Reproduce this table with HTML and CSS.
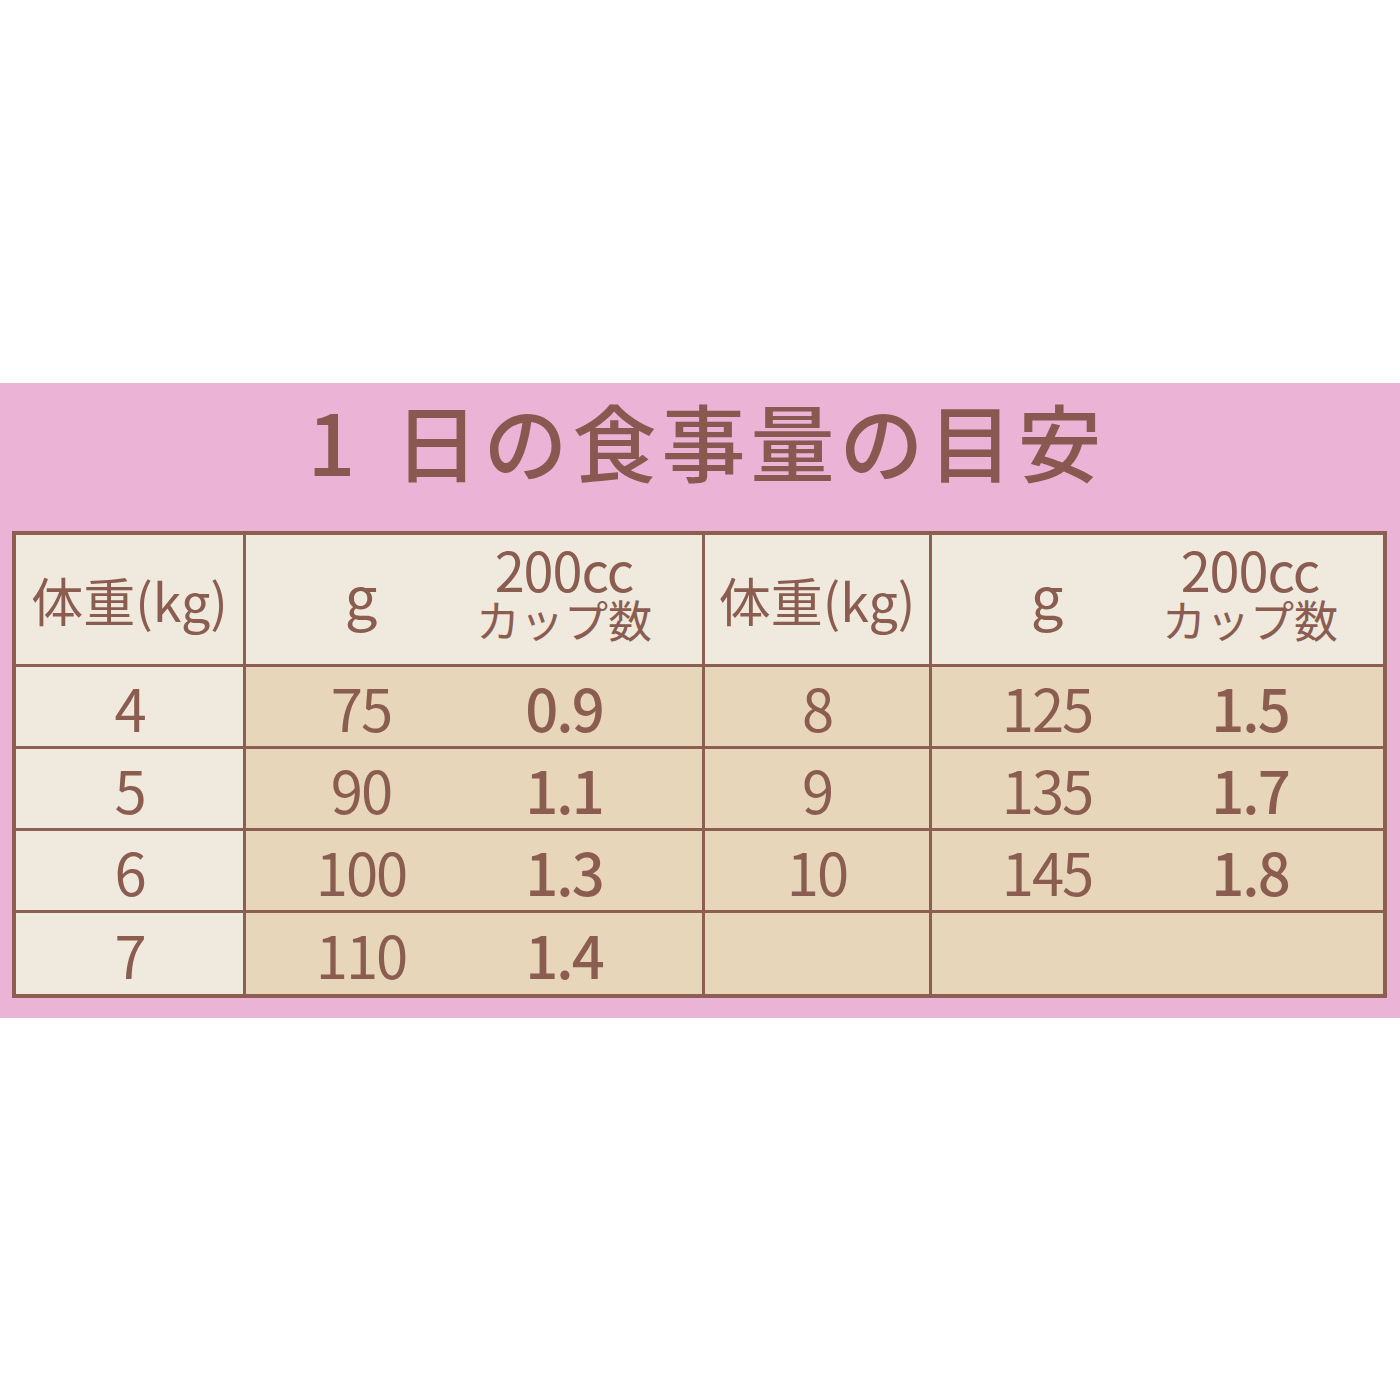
FILE: index.html
```html
<!DOCTYPE html>
<html lang="ja">
<head>
<meta charset="utf-8">
<title>1日の食事量の目安</title>
<link rel="stylesheet" href="styles.css">
</head>
<body>
<div class="band">
  <h1 class="title"><span class="title-num">1</span>日の食事量の目安</h1>
  <div class="table">
    <div class="cell head"><span class="kg">体重(kg)</span></div>
    <div class="cell head pair"><span class="g">g</span><div class="cup">200cc
カップ数</div></div>
    <div class="cell head"><span class="kg">体重(kg)</span></div>
    <div class="cell head pair"><span class="g">g</span><div class="cup">200cc
カップ数</div></div>

    <div class="cell light num">4</div>
    <div class="cell pair"><span class="num">75</span><span class="num bold">0.9</span></div>
    <div class="cell num">8</div>
    <div class="cell pair"><span class="num">125</span><span class="num bold">1.5</span></div>

    <div class="cell light num">5</div>
    <div class="cell pair"><span class="num">90</span><span class="num bold">1.1</span></div>
    <div class="cell num">9</div>
    <div class="cell pair"><span class="num">135</span><span class="num bold">1.7</span></div>

    <div class="cell light num">6</div>
    <div class="cell pair"><span class="num">100</span><span class="num bold">1.3</span></div>
    <div class="cell num">10</div>
    <div class="cell pair"><span class="num">145</span><span class="num bold">1.8</span></div>

    <div class="cell light num">7</div>
    <div class="cell pair"><span class="num">110</span><span class="num bold">1.4</span></div>
    <div class="cell"></div>
    <div class="cell pair"></div>
  </div>
</div>
</body>
</html>
```
FILE: styles.css
```css
html, body {
  margin: 0;
  padding: 0;
  background: #ffffff;
}

body {
  font-family: "Noto Sans CJK JP", "Noto Sans", sans-serif;
  color: #8b5d51;
}

.band {
  margin-top: 383px;
  height: 635px;
  box-sizing: border-box;
  background: #ebb3d6;
  padding-top: 7px;
}

.title {
  margin: 0 0 41px 0;
  height: 100px;
  line-height: 100px;
  font-size: 84px;
  font-weight: 500;
  letter-spacing: 5px;
  color: #8a5850;
  text-align: center;
  padding-left: 14px;
}

.title-num {
  margin-right: 34px;
}

.table {
  display: grid;
  grid-template-columns: 227px 456px 224px 451px;
  grid-template-rows: 129px 79px 79px 79px 81px;
  gap: 3px;
  padding: 4px;
  width: fit-content;
  margin-left: 12px;
  background: #8d5f52;
}

.cell {
  background: #e7d6ba;
  display: flex;
  align-items: center;
  justify-content: center;
}

.cell.head,
.cell.light {
  background: #f0e9dd;
}

.cell.pair {
  display: grid;
  grid-template-columns: 230px 176px 1fr;
  align-items: center;
  justify-items: center;
}

.kg {
  font-size: 52px;
  line-height: 1;
}

.g {
  font-size: 58px;
  line-height: 1;
  position: relative;
  top: -6px;
}

.cup {
  white-space: pre-line;
  text-align: center;
  font-size: 44px;
  line-height: 50px;
  position: relative;
  top: -6px;
}

.cup::first-line {
  font-size: 54px;
  letter-spacing: -1px;
}

.num {
  font-size: 58px;
  line-height: 1;
  letter-spacing: -2px;
}

.num.bold {
  font-weight: 500;
}
```
